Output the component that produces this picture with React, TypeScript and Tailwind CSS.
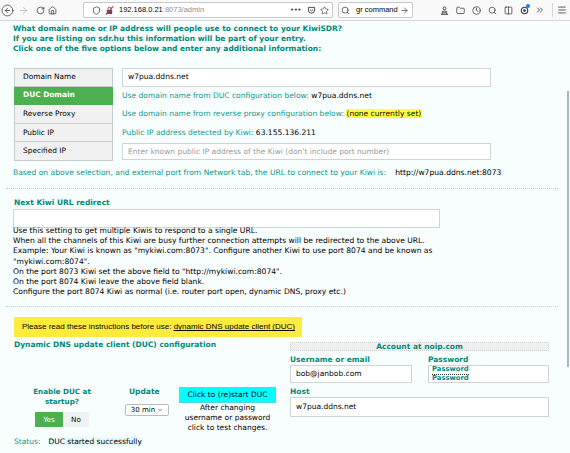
import {
  ArrowRight,
  RotateCw,
  Home,
  Shield,
  Star,
  Search,
  Folder,
  Clock,
  Columns2,
  ChevronsRight,
  Menu,
  ChevronDown,
  CircleArrowLeft,
} from 'lucide-react';

function Toolbar() {
  return (
    <div className="flex h-[21px] items-center border-b border-[#d7d7db] bg-[#f9f9fa] text-[#3b3b3f]">
      <div className="flex w-[14px] justify-center">
        <CircleArrowLeft size={13} strokeWidth={1.4} />
      </div>
      <div className="flex w-[19px] justify-center text-[#b1b1b3]">
        <ArrowRight size={11} strokeWidth={1.6} />
      </div>
      <div className="flex w-[15px] justify-center">
        <RotateCw size={9} strokeWidth={2} />
      </div>
      <div className="flex w-[9px] justify-center">
        <Home size={9} strokeWidth={2} />
      </div>

      {/* url bar */}
      <div className="ml-[26px] flex h-[16px] w-[250px] items-center rounded-[2px] border border-[#c8c8cc] bg-white pl-[8px] pr-[3px]">
        <Shield size={9} strokeWidth={2} />
        <svg className="ml-[4px]" width="9" height="9" viewBox="0 0 10 10">
          <rect x="2" y="4.5" width="6" height="4.5" rx="0.5" fill="#555" />
          <path d="M3.3 4.5V3a1.7 1.7 0 0 1 3.4 0v1.5" fill="none" stroke="#555" strokeWidth="1" />
          <line x1="1" y1="9.5" x2="9" y2="0.5" stroke="#e22850" strokeWidth="1.3" />
        </svg>
        <span className="ml-[5px] font-['Liberation_Sans',sans-serif] text-[7.5px] leading-none">
          <span className="text-black">192.168.0.21</span>
          <span className="text-[#8f8f9d]">:8073/admin</span>
        </span>
        <span className="ml-auto text-[7px] leading-none tracking-[-0.5px]">•••</span>
        <svg className="ml-[6px]" width="9" height="9" viewBox="0 0 10 10">
          <path d="M1.5 1.5h7v3a3.5 3.5 0 0 1-7 0z" fill="none" stroke="#3b3b3f" strokeWidth="1" />
          <path d="M3.3 4l1.7 1.6L6.7 4" fill="none" stroke="#3b3b3f" strokeWidth="1" />
        </svg>
        <Star className="ml-[4px]" size={9} strokeWidth={1.8} />
      </div>

      {/* search box */}
      <div className="ml-[5px] flex h-[16px] w-[75px] items-center rounded-[2px] border border-[#c8c8cc] bg-white pl-[2px] pr-[3px]">
        <Search size={9} strokeWidth={2} />
        <span className="ml-[6px] font-['Liberation_Sans',sans-serif] text-[7.5px] leading-none text-black">gr command</span>
        <ArrowRight className="ml-auto" size={9} strokeWidth={1.8} />
      </div>

      <div className="ml-[23px] flex w-[16px] justify-center">
        <svg width="9" height="9" viewBox="0 0 10 10" fill="none" stroke="#3b3b3f" strokeWidth="1">
          <circle cx="5" cy="2.6" r="1.6" />
          <path d="M2 6.5q3-2 6 0" />
          <path d="M1 9.3h8M2.5 9.3V7.5h5v1.8" />
        </svg>
      </div>
      <div className="flex w-[16px] justify-center">
        <Folder size={9} strokeWidth={2} />
      </div>
      <div className="flex w-[16px] justify-center">
        <Clock size={9} strokeWidth={2} />
      </div>
      <div className="flex w-[16px] justify-center">
        <Search size={9} strokeWidth={2} />
      </div>
      <div className="flex w-[16px] justify-center">
        <Columns2 size={9} strokeWidth={2} />
      </div>
      <div className="relative flex w-[16px] justify-center">
        <svg width="9" height="9" viewBox="0 0 10 10">
          <circle cx="5" cy="5" r="3.6" fill="none" stroke="#3b3b3f" strokeWidth="1.2" />
          <circle cx="5" cy="5" r="1.5" fill="#3b3b3f" />
        </svg>
        <span className="absolute right-[2px] top-[-2px] h-[4px] w-[4px] rounded-full bg-[#0a84ff]" />
      </div>
      <div className="flex w-[16px] justify-center">
        <ChevronsRight size={10} strokeWidth={2} />
      </div>
      <div className="ml-[4px] h-[14px] w-px bg-[#d7d7db]" />
      <div className="ml-px flex w-[16px] justify-center">
        <Menu size={10} strokeWidth={2} />
      </div>
    </div>
  );
}

function Field({ children, className = '' }: { children?: React.ReactNode; className?: string }) {
  return (
    <div className={`flex items-center border border-[#cfd4d6] bg-white pl-[5px] ${className}`}>{children}</div>
  );
}

const rows = ['Domain Name', 'DUC Domain', 'Reverse Proxy', 'Public IP', 'Specified IP'];

export default function App() {
  return (
    <div className="relative h-[453px] w-[570px] overflow-hidden bg-[#f8fdfd] font-['DejaVu_Sans',sans-serif] text-[7.6px] leading-[10px] text-black">
      <Toolbar />

      <div className="pl-[13px] pt-[3px]">
        <div className="text-[7.5px] font-bold text-[#00897b]">
          <div>What domain name or IP address will people use to connect to your KiwiSDR?</div>
          <div>If you are listing on sdr.hu this information will be part of your entry.</div>
          <div>Click one of the five options below and enter any additional information:</div>
        </div>

        {/* domain choice table */}
        <div className="ml-px mt-[14px] grid grid-cols-[99px_369px] gap-x-[9px] text-[7.55px]">
          {rows.map((r, i) => (
            <div key={r} className="contents">
              <div
                className={`flex h-[18.6px] items-center border-x border-b pl-[8px] text-[7.4px] ${
                  i === 0 ? 'border-t' : ''
                } ${
                  i === 1
                    ? 'border-[#4caf50] bg-[#4caf50] font-bold text-white'
                    : 'border-[#c9cccc] bg-[#f1f1f1]'
                }`}
              >
                {r}
              </div>
              <div className="flex h-[18.6px] items-center">
                {i === 0 && <Field className="h-full w-full">w7pua.ddns.net</Field>}
                {i === 1 && (
                  <span>
                    <span className="text-[#11998a]">Use domain name from DUC configuration below: </span>
                    w7pua.ddns.net
                  </span>
                )}
                {i === 2 && (
                  <span>
                    <span className="text-[#11998a]">Use domain name from reverse proxy configuration below: </span>
                    <span className="bg-[#ffff3b]">(none currently set)</span>
                  </span>
                )}
                {i === 3 && (
                  <span>
                    <span className="text-[#11998a]">Public IP address detected by Kiwi: </span>
                    63.155.136.211
                  </span>
                )}
                {i === 4 && (
                  <Field className="h-[17px] w-full text-[7.5px] text-[#9a9a9a]">
                    Enter known public IP address of the Kiwi (don't include port number)
                  </Field>
                )}
              </div>
            </div>
          ))}
        </div>

        <div className="mt-[7px] whitespace-nowrap">
          <span className="text-[#11998a]">
            Based on above selection, and external port from Network tab, the URL to connect to your Kiwi is:
          </span>
          <span className="ml-[9px]">http://w7pua.ddns.net:8073</span>
        </div>

        <div className="ml-[-7px] mt-[10px] w-[552px] border-t border-dotted border-[#c4c8c8]" />

        <div className="ml-px mt-[9px] text-[7.5px] font-bold text-[#00897b]">Next Kiwi URL redirect</div>
        <Field className="mt-px h-[19px] w-[427px]" />
        <div className="mt-[-2px] whitespace-nowrap leading-[10.2px]">
          <div>Use this setting to get multiple Kiwis to respond to a single URL.</div>
          <div>When all the channels of this Kiwi are busy further connection attempts will be redirected to the above URL.</div>
          <div>Example: Your Kiwi is known as "mykiwi.com:8073". Configure another Kiwi to use port 8074 and be known as</div>
          <div>"mykiwi.com:8074".</div>
          <div>On the port 8073 Kiwi set the above field to "http://mykiwi.com:8074".</div>
          <div>On the port 8074 Kiwi leave the above field blank.</div>
          <div>Configure the port 8074 Kiwi as normal (i.e. router port open, dynamic DNS, proxy etc.)</div>
        </div>

        <div className="ml-[-7px] mt-[9px] w-[552px] border-t border-dotted border-[#c4c8c8]" />

        <div className="ml-px mt-[10px] flex h-[20px] w-[288px] items-center whitespace-nowrap bg-[#ffeb3b] pl-[8px] font-['Liberation_Sans',sans-serif] text-[8px]">
          Please read these instructions before use:&nbsp;<span className="underline">dynamic DNS update client (DUC)</span>
        </div>

        <div className="flex text-[7.5px]">
          {/* left column */}
          <div className="w-[277px]">
            <div className="ml-px mt-[3px] font-bold text-[#00897b]">Dynamic DNS update client (DUC) configuration</div>

            <div className="mt-[37px] flex items-start">
              <div className="ml-[17px] flex w-[64px] flex-col items-center text-center text-[7.2px] font-bold text-[#00897b]">
                <div>Enable DUC at</div>
                <div>startup?</div>
                <div className="mt-[5px] flex h-[15px] font-normal">
                  <div className="flex w-[28px] items-center justify-center bg-[#4caf50] text-white">Yes</div>
                  <div className="flex w-[26px] items-center justify-center bg-[#f1f1f1] text-black">No</div>
                </div>
              </div>

              <div className="ml-[31px] flex flex-col">
                <div className="ml-[4px] font-bold text-[#00897b]">Update</div>
                <div className="mt-[7px] flex h-[12px] w-[44px] items-center justify-center gap-[2px] rounded-[2px] border border-[#b9bcbc] bg-white text-[7px]">
                  30 min
                  <ChevronDown size={6} strokeWidth={2} />
                </div>
              </div>

              <div className="ml-[10px] flex w-[97px] flex-col items-center text-center">
                <div className="flex h-[16px] w-full items-center justify-center border border-[#5fd6d6] bg-[#00ffff]">
                  Click to (re)start DUC
                </div>
                <div>After changing</div>
                <div>username or password</div>
                <div>click to test changes.</div>
              </div>
            </div>

            <div className="ml-px mt-[4px] whitespace-nowrap">
              <span className="text-[#11998a]">Status:</span>
              <span className="ml-[8px] bg-[#e6fbfb]">DUC started successfully</span>
            </div>
          </div>

          {/* right column */}
          <div className="w-[259px]">
            <div className="mt-[5px] flex h-[9px] items-center justify-center border border-dotted border-[#d2d2d2] bg-[#efefef] font-bold leading-none text-[#00897b]">
              Account at noip.com
            </div>
            <div className="mt-[4px] flex font-bold text-[#00897b]">
              <div className="w-[138px]">Username or email</div>
              <div>Password</div>
            </div>
            <div className="flex">
              <Field className="h-[18px] w-[122px]">bob@janbob.com</Field>
              <div className="ml-[16px] flex h-[18px] w-[121px] flex-col justify-center border border-[#cfd4d6] bg-white pl-[3px] text-[6.8px] font-bold leading-[7.5px] text-[#00897b]">
                <span className="w-fit border-b border-dotted border-[#333]">Password</span>
                <span>Password</span>
              </div>
            </div>
            <div className="mt-[4px] font-bold text-[#00897b]">Host</div>
            <Field className="h-[20px] w-full">w7pua.ddns.net</Field>
          </div>
        </div>
      </div>

      <div className="absolute right-[1px] top-[91px] h-[276px] w-[2px] bg-[#a7b6c5]" />
    </div>
  );
}
